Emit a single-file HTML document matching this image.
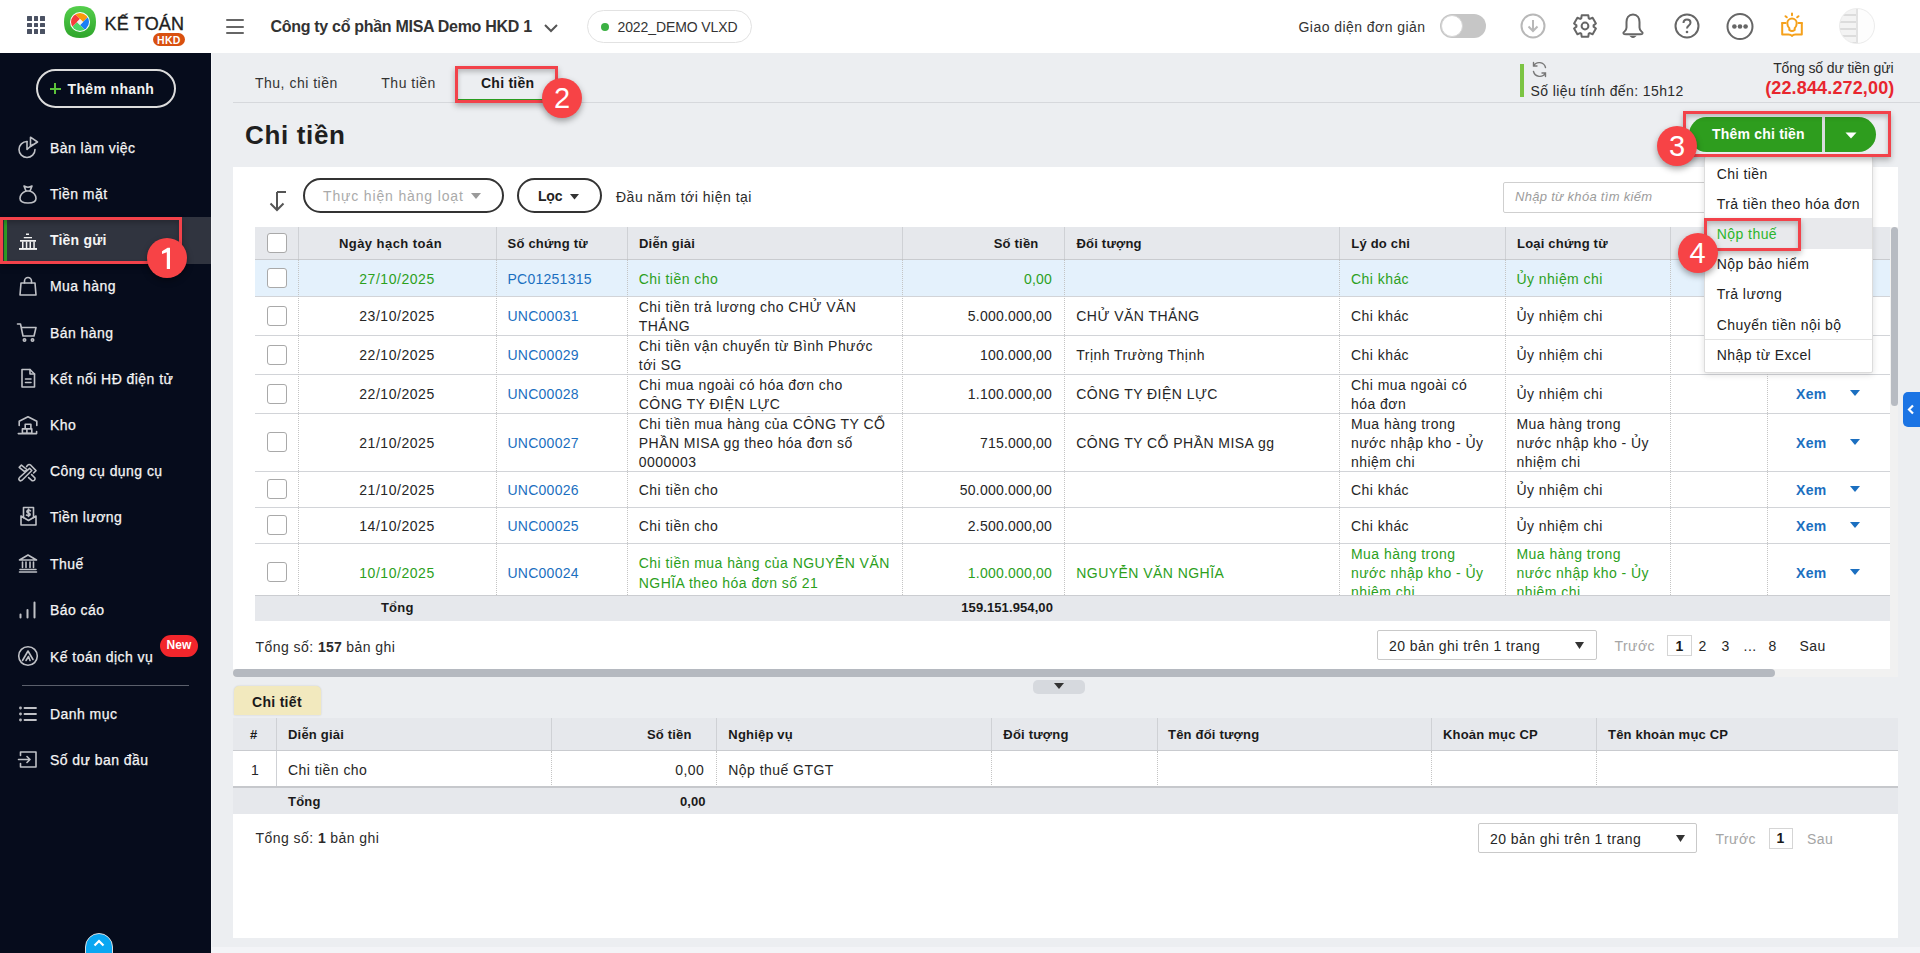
<!DOCTYPE html><html><head><meta charset="utf-8"><style>
*{box-sizing:border-box;margin:0;padding:0}
html,body{width:1920px;height:953px;overflow:hidden;background:#eceef1;font-family:"Liberation Sans", sans-serif;}
.t{position:absolute;white-space:nowrap;}
.r{position:absolute;}
.ic{position:absolute;overflow:visible}
.badge{position:absolute;width:40px;height:40px;border-radius:50%;background:#f74346;color:#fff;font-size:29px;line-height:40px;text-align:center;font-family:"Liberation Sans", sans-serif;box-shadow:0 3px 6px rgba(0,0,0,.35);}
.rbox{position:absolute;border:3px solid #f2424a;box-shadow:0 3px 6px rgba(0,0,0,.28), inset 0 3px 5px rgba(0,0,0,.22);}
</style></head><body><div class="r" style="left:0px;top:0px;width:1920px;height:53px;background:#fff;"></div>
<div class="r" style="left:27.0px;top:16.0px;width:4.6px;height:4.6px;background:#4b5263;border-radius:.5px;"></div>
<div class="r" style="left:33.6px;top:16.0px;width:4.6px;height:4.6px;background:#4b5263;border-radius:.5px;"></div>
<div class="r" style="left:40.2px;top:16.0px;width:4.6px;height:4.6px;background:#4b5263;border-radius:.5px;"></div>
<div class="r" style="left:27.0px;top:22.6px;width:4.6px;height:4.6px;background:#4b5263;border-radius:.5px;"></div>
<div class="r" style="left:33.6px;top:22.6px;width:4.6px;height:4.6px;background:#4b5263;border-radius:.5px;"></div>
<div class="r" style="left:40.2px;top:22.6px;width:4.6px;height:4.6px;background:#4b5263;border-radius:.5px;"></div>
<div class="r" style="left:27.0px;top:29.2px;width:4.6px;height:4.6px;background:#4b5263;border-radius:.5px;"></div>
<div class="r" style="left:33.6px;top:29.2px;width:4.6px;height:4.6px;background:#4b5263;border-radius:.5px;"></div>
<div class="r" style="left:40.2px;top:29.2px;width:4.6px;height:4.6px;background:#4b5263;border-radius:.5px;"></div>
<svg class="ic" style="left:64px;top:6px" width="32" height="32" viewBox="0 0 32 32">
<defs><linearGradient id="lg" x1="0" y1="0" x2="0" y2="1"><stop offset="0" stop-color="#55cf4c"/><stop offset="1" stop-color="#2ea52b"/></linearGradient></defs>
<path d="M16 0 C27 0 32 5 32 16 C32 27 27 32 16 32 C5 32 0 27 0 16 C0 5 5 0 16 0Z" fill="url(#lg)"/>
<circle cx="16" cy="16" r="10" fill="#fff"/>
<clipPath id="cc"><circle cx="0" cy="0" r="9"/></clipPath>
<g transform="translate(16 16)" clip-path="url(#cc)">
<path d="M0 -3 L-20 -23 L23 -20 L3 0Z" fill="#fa9a0a"/>
<path d="M3 0 L23 -20 L20 23 L0 3Z" fill="#1a7ff5"/>
<path d="M0 3 L20 23 L-23 20 L-3 0Z" fill="#4ad866"/>
<path d="M-3 0 L-23 20 L-20 -23 L0 -3Z" fill="#f53b3b"/>
<path d="M0 -3 L3 0 L0 3 L-3 0Z" fill="#f2f2f2"/>
</g></svg>
<div class="t" style="left:104.5px;top:13.91px;font-size:18px;line-height:20.7px;font-weight:400;color:#1e1e1e;letter-spacing:0.2px;-webkit-text-stroke:0.35px #1e1e1e;">KẾ TOÁN</div>
<div class="r" style="left:153px;top:33.3px;width:32px;height:12.5px;background:#d9500f;border-radius:7px;"></div>
<div class="t" style="left:157px;top:33.83px;font-size:10.5px;line-height:12.07px;font-weight:700;color:#fff;letter-spacing:0.3px;">HKD</div>
<div class="r" style="left:226px;top:19.0px;width:18px;height:2px;background:#666;border-radius:1px;"></div>
<div class="r" style="left:226px;top:25.5px;width:18px;height:2px;background:#666;border-radius:1px;"></div>
<div class="r" style="left:226px;top:32.0px;width:18px;height:2px;background:#666;border-radius:1px;"></div>
<div class="t" style="left:270.5px;top:18.46px;font-size:16px;line-height:18.4px;font-weight:700;color:#333;letter-spacing:-0.3px;">Công ty cổ phần MISA Demo HKD 1</div>
<svg class="ic" style="left:543px;top:22px" width="16" height="12" viewBox="0 0 16 12"><path d="M2 3 L8 9 L14 3" fill="none" stroke="#555" stroke-width="2"/></svg>
<div class="r" style="left:587px;top:10px;width:165px;height:33px;border:1px solid #e2e2e2;border-radius:17px;background:#fff;"></div>
<div class="r" style="left:601px;top:23px;width:8px;height:8px;background:#3bb143;border-radius:50%;"></div>
<div class="t" style="left:617.5px;top:19.40px;font-size:14px;line-height:16.1px;font-weight:400;color:#333;letter-spacing:-0.1px;">2022_DEMO VLXD</div>
<div class="t" style="left:1298.5px;top:18.90px;font-size:14px;line-height:16.1px;font-weight:400;color:#333;letter-spacing:0.45px;">Giao diện đơn giản</div>
<div class="r" style="left:1440px;top:14px;width:46px;height:24px;background:#c6c6c6;border-radius:12px;"></div>
<div class="r" style="left:1441px;top:15px;width:22px;height:22px;background:#fff;border-radius:50%;border:1px solid #d6d6d6;"></div>
<svg class="ic" style="left:1520px;top:13px" width="26" height="26" viewBox="0 0 26 26"><circle cx="13" cy="13" r="11.5" fill="none" stroke="#b8b8b8" stroke-width="2"/><path d="M13 7 V18 M8.5 13.5 L13 18 L17.5 13.5" fill="none" stroke="#b8b8b8" stroke-width="2"/></svg>
<svg class="ic" style="left:1572px;top:13px" width="26" height="26" viewBox="0 0 26 26"><path fill="none" stroke="#666" stroke-width="2" stroke-linejoin="round" transform="rotate(90 13 13)" d="M20.74 9.26 L23.70 9.69 L23.70 16.31 L20.74 16.74 L20.11 17.84 L21.22 20.61 L15.48 23.92 L13.63 21.58 L12.37 21.58 L10.52 23.92 L4.78 20.61 L5.89 17.84 L5.26 16.74 L2.30 16.31 L2.30 9.69 L5.26 9.26 L5.89 8.16 L4.78 5.39 L10.52 2.08 L12.37 4.42 L13.63 4.42 L15.48 2.08 L21.22 5.39 L20.11 8.16Z"/><circle cx="13" cy="13" r="3.4" fill="none" stroke="#666" stroke-width="2"/></svg>
<svg class="ic" style="left:1620px;top:12px" width="26" height="28" viewBox="0 0 26 28"><path d="M13 2.5 C8.5 2.5 6.5 6 6.5 10 V15.5 Q6.5 18 4.5 19.5 Q3 20.5 3.5 21.5 Q4 22.3 6 22.3 H20 Q22 22.3 22.5 21.5 Q23 20.5 21.5 19.5 Q19.5 18 19.5 15.5 V10 C19.5 6 17.5 2.5 13 2.5Z" fill="none" stroke="#666" stroke-width="2" stroke-linejoin="round"/><path d="M10.8 24.3 Q13 26.3 15.2 24.3Z" fill="#666" stroke="#666" stroke-width="1.2"/></svg>
<svg class="ic" style="left:1674px;top:13px" width="26" height="26" viewBox="0 0 26 26"><circle cx="13" cy="13" r="11.5" fill="none" stroke="#666" stroke-width="2"/><path d="M9.5 10 C9.5 7.5 11 6.5 13 6.5 C15 6.5 16.5 7.8 16.5 9.7 C16.5 12.5 13 12.5 13 15.5" fill="none" stroke="#666" stroke-width="2"/><circle cx="13" cy="19" r="1.3" fill="#666"/></svg>
<svg class="ic" style="left:1726px;top:13px" width="28" height="28" viewBox="0 0 28 28"><circle cx="14" cy="13.5" r="12.5" fill="none" stroke="#666" stroke-width="2"/><circle cx="8.4" cy="13.5" r="2.3" fill="#666"/><circle cx="14" cy="13.5" r="2.3" fill="#666"/><circle cx="19.6" cy="13.5" r="2.3" fill="#666"/></svg>
<svg class="ic" style="left:1779px;top:12px" width="26" height="26" viewBox="0 0 26 26"><g fill="none" stroke="#f5a11c" stroke-width="2" stroke-linejoin="round" stroke-linecap="round"><path d="M3.2 11 V22.5 H9.5 Q12 22.5 13 24 Q14 22.5 16.5 22.5 H22.8 V11"/><path d="M3.2 11 H6.5 M22.8 11 H19.5"/><path d="M10.3 16.2 Q8.3 14.2 8.3 11.3 A4.7 4.7 0 0 1 17.7 11.3 Q17.7 14.2 15.7 16.2 V18 Q13 20 10.3 18Z"/><path d="M13 1.5 V3.2 M6.5 4.2 L7.8 5.3 M19.5 4.2 L18.2 5.3"/></g></svg>
<div class="r" style="left:1839px;top:8px;width:36px;height:36px;border-radius:50%;background:linear-gradient(90deg,rgba(255,255,255,0) 48%,#e2e2e2 48%,#e2e2e2 52%,#fdfdfd 52%),repeating-linear-gradient(180deg,#f3f3f3 0,#f3f3f3 5px,#dcdcdc 5px,#dcdcdc 7px);border:1px solid #ececec;"></div>
<div class="r" style="left:0px;top:53px;width:211px;height:900px;background:#060c1c;"></div>
<div class="r" style="left:211px;top:53px;width:1px;height:900px;background:#f4f5f7;"></div>
<div class="r" style="left:36px;top:69px;width:140px;height:39px;border:2px solid #dcdcdc;border-radius:20px;"></div>
<div class="r" style="left:49.5px;top:87.5px;width:11.5px;height:2.2px;background:#5cc33a;"></div>
<div class="r" style="left:54.1px;top:82.8px;width:2.2px;height:11.5px;background:#5cc33a;"></div>
<div class="t" style="left:67.5px;top:80.60px;font-size:14px;line-height:16.1px;font-weight:700;color:#f2f2f2;letter-spacing:0.35px;">Thêm nhanh</div>
<div class="r" style="left:0px;top:217px;width:211px;height:47px;background:#30343f;"></div>
<div class="r" style="left:3.5px;top:220px;width:3px;height:42px;background:#2f9e24;"></div>
<div class="t" style="left:50px;top:139.90px;font-size:14px;line-height:16.1px;font-weight:400;color:#f5f5f5;letter-spacing:0.45px;-webkit-text-stroke:0.25px #f5f5f5;">Bàn làm việc</div>
<div class="t" style="left:50px;top:186.00px;font-size:14px;line-height:16.1px;font-weight:400;color:#f5f5f5;letter-spacing:0.45px;-webkit-text-stroke:0.25px #f5f5f5;">Tiền mặt</div>
<div class="t" style="left:50px;top:232.10px;font-size:14px;line-height:16.1px;font-weight:700;color:#f5f5f5;letter-spacing:0.2px;">Tiền gửi</div>
<div class="t" style="left:50px;top:278.40px;font-size:14px;line-height:16.1px;font-weight:400;color:#f5f5f5;letter-spacing:0.45px;-webkit-text-stroke:0.25px #f5f5f5;">Mua hàng</div>
<div class="t" style="left:50px;top:324.60px;font-size:14px;line-height:16.1px;font-weight:400;color:#f5f5f5;letter-spacing:0.45px;-webkit-text-stroke:0.25px #f5f5f5;">Bán hàng</div>
<div class="t" style="left:50px;top:370.70px;font-size:14px;line-height:16.1px;font-weight:400;color:#f5f5f5;letter-spacing:0.45px;-webkit-text-stroke:0.25px #f5f5f5;">Kết nối HĐ điện tử</div>
<div class="t" style="left:50px;top:416.90px;font-size:14px;line-height:16.1px;font-weight:400;color:#f5f5f5;letter-spacing:0.45px;-webkit-text-stroke:0.25px #f5f5f5;">Kho</div>
<div class="t" style="left:50px;top:463.10px;font-size:14px;line-height:16.1px;font-weight:400;color:#f5f5f5;letter-spacing:0.45px;-webkit-text-stroke:0.25px #f5f5f5;">Công cụ dụng cụ</div>
<div class="t" style="left:50px;top:509.40px;font-size:14px;line-height:16.1px;font-weight:400;color:#f5f5f5;letter-spacing:0.45px;-webkit-text-stroke:0.25px #f5f5f5;">Tiền lương</div>
<div class="t" style="left:50px;top:555.70px;font-size:14px;line-height:16.1px;font-weight:400;color:#f5f5f5;letter-spacing:0.45px;-webkit-text-stroke:0.25px #f5f5f5;">Thuế</div>
<div class="t" style="left:50px;top:602.10px;font-size:14px;line-height:16.1px;font-weight:400;color:#f5f5f5;letter-spacing:0.45px;-webkit-text-stroke:0.25px #f5f5f5;">Báo cáo</div>
<div class="t" style="left:50px;top:648.60px;font-size:14px;line-height:16.1px;font-weight:400;color:#f5f5f5;letter-spacing:0.45px;-webkit-text-stroke:0.25px #f5f5f5;">Kế toán dịch vụ</div>
<div class="t" style="left:50px;top:706.10px;font-size:14px;line-height:16.1px;font-weight:400;color:#f5f5f5;letter-spacing:0.45px;-webkit-text-stroke:0.25px #f5f5f5;">Danh mục</div>
<div class="t" style="left:50px;top:751.90px;font-size:14px;line-height:16.1px;font-weight:400;color:#f5f5f5;letter-spacing:0.45px;-webkit-text-stroke:0.25px #f5f5f5;">Số dư ban đầu</div>
<div class="r" style="left:22px;top:685px;width:167px;height:1px;background:#5b606c;"></div>
<div class="r" style="left:160px;top:635px;width:38px;height:22px;background:#f2262c;border-radius:11px;"></div>
<div class="t" style="left:166.5px;top:639.44px;font-size:12px;line-height:13.8px;font-weight:700;color:#fff;letter-spacing:0.1px;">New</div>
<svg class="ic" style="left:17px;top:136px" width="22" height="22" viewBox="0 0 22 22"><g fill="none" stroke="#bfc1c6" stroke-width="1.6" stroke-linejoin="round" stroke-linecap="round"><path d="M10 5.5 A8 8 0 1 0 18 13.5"/><path d="M10 5.5 V13.5 L15.5 8.5"/><path d="M13.5 1.2 L20.5 6 L13.5 10.5Z"/></g></svg>
<svg class="ic" style="left:17px;top:183px" width="22" height="22" viewBox="0 0 22 22"><g fill="none" stroke="#bfc1c6" stroke-width="1.6" stroke-linejoin="round" stroke-linecap="round"><path d="M7 3 Q11 5.5 15 3 L13 8 Q19 10.5 19 15.5 Q19 20 11 20 Q3 20 3 15.5 Q3 10.5 9 8Z"/><path d="M9 8 H13"/></g></svg>
<svg class="ic" style="left:17px;top:228px" width="22" height="22" viewBox="0 0 22 22"><g fill="#f2f2f2"><rect x="9" y="5.5" width="3" height="1.5"/><rect x="6.8" y="9" width="8.2" height="1.3"/><rect x="3" y="12" width="16" height="1.7"/><rect x="5" y="13.5" width="1.5" height="6.6"/><rect x="8.8" y="13.5" width="1.5" height="6.6"/><rect x="12.5" y="13.5" width="1.5" height="6.6"/><rect x="16.3" y="13.5" width="1.5" height="6.6"/><rect x="2" y="20" width="18" height="1.9"/></g></svg>
<svg class="ic" style="left:17px;top:275px" width="22" height="22" viewBox="0 0 22 22"><g fill="none" stroke="#bfc1c6" stroke-width="1.6" stroke-linejoin="round" stroke-linecap="round"><path d="M4 8 H18 L19 20 H3Z"/><path d="M7.5 8 V6 A3.5 3.5 0 0 1 14.5 6 V8"/></g></svg>
<svg class="ic" style="left:16px;top:321px" width="22" height="22" viewBox="0 0 22 22"><g fill="none" stroke="#bfc1c6" stroke-width="1.6" stroke-linejoin="round" stroke-linecap="round"><path d="M1.5 3 H4.5 L7 15 H18 L20 6.5 H6"/><circle cx="8.5" cy="19" r="1.2"/><circle cx="16.5" cy="19" r="1.2"/></g></svg>
<svg class="ic" style="left:17px;top:367px" width="22" height="22" viewBox="0 0 22 22"><g fill="none" stroke="#bfc1c6" stroke-width="1.6" stroke-linejoin="round" stroke-linecap="round"><path d="M5 2.5 H13 L17.5 7 V20 H5Z"/><path d="M13 2.5 V7 H17.5 M8.5 12 H14 M8.5 15.5 H14"/></g></svg>
<svg class="ic" style="left:17px;top:413px" width="22" height="22" viewBox="0 0 22 22"><g fill="none" stroke="#bfc1c6" stroke-width="1.6" stroke-linejoin="round" stroke-linecap="round"><path d="M2.2 12.4 V8.3 L11 3.8 L19.8 8.3 V12.4"/><path d="M1.3 20.6 H19.6 V18.6"/><path d="M8.2 11.2 H13.9 V15.9 H8.2Z M5.4 15.9 H14.8 V20.3 H5.4Z M9.9 15.9 V20.3"/></g></svg>
<svg class="ic" style="left:17px;top:459px" width="22" height="22" viewBox="0 0 22 22"><g fill="none" stroke="#bfc1c6" stroke-width="1.6" stroke-linejoin="round" stroke-linecap="round"><path d="M2.2 8.3 L4.4 6.1 L9.8 10.5 L7.6 12.7Z"/><path d="M12.6 9.3 L14.8 11.5 L5 21.2 Q3.6 22.4 2.3 21.2 Q1.1 19.9 2.5 18.5Z"/><path d="M9.6 7.6 Q11.2 4.4 13.8 6.2 L19 11.6 L16.6 14"/><path d="M14.6 15.6 L18 19 Q18.3 22.2 15 21.6 L11.6 18.6"/></g></svg>
<svg class="ic" style="left:17px;top:505px" width="22" height="22" viewBox="0 0 22 22"><g fill="none" stroke="#bfc1c6" stroke-width="1.6" stroke-linejoin="round" stroke-linecap="round"><path d="M4 11 V20 H19 V11 L11.5 15.5Z M6.5 13 V2.5 H16.5 V13"/><path d="M13.5 5.8 Q11.5 4.5 10 6 Q9.5 7.5 11.5 8 Q13.5 8.5 13 10 Q12 11.3 9.5 10 M11.5 4 V11.5"/></g></svg>
<svg class="ic" style="left:17px;top:552px" width="22" height="22" viewBox="0 0 22 22"><g fill="none" stroke="#bfc1c6" stroke-width="1.6" stroke-linejoin="round" stroke-linecap="round"><path d="M2.5 8 L11 3 L19.5 8 Z M2.5 20 H19.5 M3 17.5 H19 M5.5 10 V15.5 M9 10 V15.5 M13 10 V15.5 M16.5 10 V15.5"/></g></svg>
<svg class="ic" style="left:17px;top:598px" width="22" height="22" viewBox="0 0 22 22"><g fill="none" stroke="#bfc1c6" stroke-width="1.6" stroke-linejoin="round" stroke-linecap="round"><path d="M3.5 19.5 V16.5 M10.5 19.5 V12 M17.5 19.5 V4.5" stroke-width="2"/></g></svg>
<svg class="ic" style="left:17px;top:645px" width="22" height="22" viewBox="0 0 22 22"><g fill="none" stroke="#bfc1c6" stroke-width="1.6" stroke-linejoin="round" stroke-linecap="round"><circle cx="11" cy="11" r="9.3"/><path d="M5.5 15.5 L11 6 L16 14.5 M9 15.5 L11.5 11.5 L13 15.5" /></g></svg>
<svg class="ic" style="left:17px;top:703px" width="22" height="22" viewBox="0 0 22 22"><g fill="none" stroke="#bfc1c6" stroke-width="1.6" stroke-linejoin="round" stroke-linecap="round"><path d="M7.5 5 H19 M7.5 11 H19 M7.5 17 H19" stroke-width="1.8"/><circle cx="3.5" cy="5" r=".6"/><circle cx="3.5" cy="11" r=".6"/><circle cx="3.5" cy="17" r=".6"/></g></svg>
<svg class="ic" style="left:17px;top:748px" width="22" height="22" viewBox="0 0 22 22"><g fill="none" stroke="#bfc1c6" stroke-width="1.6" stroke-linejoin="round" stroke-linecap="round"><path d="M3.5 7.5 V4 H19 V19 H3.5 V15.5 M1.5 11.5 H13 M10 8.5 L13 11.5 L10 14.5"/></g></svg>
<div class="r" style="left:85px;top:933px;width:28px;height:40px;border-radius:14px;background:#0aa7f2;border:1px solid #ddd;"></div>
<svg class="ic" style="left:92px;top:938px" width="14" height="10" viewBox="0 0 14 10"><path d="M2.5 7.5 L7 3 L11.5 7.5" fill="none" stroke="#fff" stroke-width="2.2"/></svg>
<div class="t" style="left:255px;top:75.10px;font-size:14px;line-height:16.1px;font-weight:400;color:#333;letter-spacing:0.5px;">Thu, chi tiền</div>
<div class="t" style="left:381.3px;top:75.10px;font-size:14px;line-height:16.1px;font-weight:400;color:#333;letter-spacing:0.5px;">Thu tiền</div>
<div class="r" style="left:233px;top:102px;width:1687px;height:1px;background:#d6d8dc;"></div>
<div class="r" style="left:458px;top:99px;width:97px;height:2px;background:#2a9f20;"></div>
<div class="t" style="left:481px;top:75.10px;font-size:14px;line-height:16.1px;font-weight:700;color:#1a1a1a;letter-spacing:0.25px;">Chi tiền</div>
<div class="t" style="left:245px;top:120.54px;font-size:26px;line-height:29.9px;font-weight:700;color:#1f1f1f;letter-spacing:0.65px;">Chi tiền</div>
<div class="r" style="left:1520px;top:64px;width:4px;height:33px;background:#7cc443;"></div>
<svg class="ic" style="left:1530px;top:60px" width="19" height="19" viewBox="0 0 19 19"><g fill="none" stroke="#777" stroke-width="1.4" stroke-linecap="round"><path d="M15.5 7.5 A6.5 6.5 0 0 0 3.5 6 M3.5 2.5 V6 H7"/><path d="M3.5 11.5 A6.5 6.5 0 0 0 15.5 13 M15.5 16.5 V13 H12"/></g></svg>
<div class="t" style="left:1530.5px;top:83.10px;font-size:14px;line-height:16.1px;font-weight:400;color:#2b2b2b;letter-spacing:0.4px;">Số liệu tính đến: 15h12</div>
<div class="t" style="right:26.5px;top:59.60px;font-size:14px;line-height:16.1px;font-weight:400;color:#2b2b2b;letter-spacing:-0.1px;">Tổng số dư tiền gửi</div>
<div class="t" style="right:25.5px;top:78.41px;font-size:18px;line-height:20.7px;font-weight:700;color:#e8262e;letter-spacing:0.15px;">(22.844.272,00)</div>
<div class="r" style="left:1689px;top:117px;width:187px;height:35px;background:#2e9d1e;border-radius:18px;"></div>
<div class="r" style="left:1822px;top:117px;width:3px;height:35px;background:#dadcde;"></div>
<div class="t" style="left:1712px;top:126.10px;font-size:14px;line-height:16.1px;font-weight:700;color:#fff;letter-spacing:0.2px;">Thêm chi tiền</div>
<svg class="ic" style="left:1845px;top:132px" width="12" height="7" viewBox="0 0 12 7"><path d="M0.5 0.5 H11.5 L6 6.5Z" fill="#fff"/></svg>
<div class="r" style="left:233px;top:167px;width:1665px;height:502px;background:#fff;"></div>
<svg class="ic" style="left:266px;top:188px" width="24" height="26" viewBox="0 0 24 26"><g fill="none" stroke="#555" stroke-width="2"><path d="M11 4 H20 M11 4 V22 M4.5 15.5 L11 22 L17.5 15.5"/></g></svg>
<div class="r" style="left:303px;top:178px;width:201px;height:35px;border:2px solid #333;border-radius:18px;"></div>
<div class="t" style="left:323px;top:188.10px;font-size:14px;line-height:16.1px;font-weight:400;color:#aaaaaa;letter-spacing:0.85px;">Thực hiện hàng loạt</div>
<svg class="ic" style="left:471px;top:193px" width="10" height="6" viewBox="0 0 10 6"><path d="M0 0 H10 L5 6Z" fill="#9a9a9a"/></svg>
<div class="r" style="left:517px;top:178px;width:85px;height:35px;border:2px solid #333;border-radius:18px;"></div>
<div class="t" style="left:538px;top:188.10px;font-size:14px;line-height:16.1px;font-weight:700;color:#222;letter-spacing:-0.2px;">Lọc</div>
<svg class="ic" style="left:569.5px;top:193.5px" width="9" height="6" viewBox="0 0 9 6"><path d="M0 0 H9 L4.5 5.5Z" fill="#333"/></svg>
<div class="t" style="left:616px;top:188.60px;font-size:14px;line-height:16.1px;font-weight:400;color:#2b2b2b;letter-spacing:0.5px;">Đầu năm tới hiện tại</div>
<div class="r" style="left:1503px;top:182px;width:369px;height:31px;border:1px solid #cfcfcf;border-radius:2px;"></div>
<div class="t" style="left:1515px;top:190.02px;font-size:13px;line-height:14.95px;font-weight:400;color:#9c9c9c;letter-spacing:0.3px;font-style:italic;">Nhập từ khóa tìm kiếm</div>
<div class="r" style="left:255px;top:227px;width:1635px;height:32px;background:#e6e8ec;"></div>
<div class="r" style="left:255px;top:259px;width:1635px;height:1px;background:#c9cbcf;"></div>
<div class="r" style="left:298px;top:227px;width:1px;height:32px;background:#cfd1d5;"></div>
<div class="r" style="left:496px;top:227px;width:1px;height:32px;background:#cfd1d5;"></div>
<div class="r" style="left:627px;top:227px;width:1px;height:32px;background:#cfd1d5;"></div>
<div class="r" style="left:902px;top:227px;width:1px;height:32px;background:#cfd1d5;"></div>
<div class="r" style="left:1064px;top:227px;width:1px;height:32px;background:#cfd1d5;"></div>
<div class="r" style="left:1339px;top:227px;width:1px;height:32px;background:#cfd1d5;"></div>
<div class="r" style="left:1505px;top:227px;width:1px;height:32px;background:#cfd1d5;"></div>
<div class="r" style="left:1670px;top:227px;width:1px;height:32px;background:#cfd1d5;"></div>
<div class="r" style="left:1767px;top:227px;width:1px;height:32px;background:#cfd1d5;"></div>
<div class="t" style="left:90.5px;width:600px;text-align:center;top:237.02px;font-size:13px;line-height:14.95px;font-weight:700;color:#1a1a1a;letter-spacing:0.45px;">Ngày hạch toán</div>
<div class="t" style="left:507.6px;top:237.02px;font-size:13px;line-height:14.95px;font-weight:700;color:#1a1a1a;letter-spacing:0.2px;">Số chứng từ</div>
<div class="t" style="left:639px;top:237.02px;font-size:13px;line-height:14.95px;font-weight:700;color:#1a1a1a;letter-spacing:0.2px;">Diễn giải</div>
<div class="t" style="right:881.5px;top:237.02px;font-size:13px;line-height:14.95px;font-weight:700;color:#1a1a1a;letter-spacing:0.2px;">Số tiền</div>
<div class="t" style="left:1076.5px;top:237.02px;font-size:13px;line-height:14.95px;font-weight:700;color:#1a1a1a;letter-spacing:0.2px;">Đối tượng</div>
<div class="t" style="left:1351.3px;top:237.02px;font-size:13px;line-height:14.95px;font-weight:700;color:#1a1a1a;letter-spacing:0.2px;">Lý do chi</div>
<div class="t" style="left:1517px;top:237.02px;font-size:13px;line-height:14.95px;font-weight:700;color:#1a1a1a;letter-spacing:0.2px;">Loại chứng từ</div>
<div class="r" style="left:267px;top:233px;width:20px;height:20px;border:1px solid #a9a9a9;border-radius:3px;background:#fff;"></div>
<div class="r" style="left:0;top:0;width:1920px;height:595.2px;overflow:hidden;">
<div class="r" style="left:255px;top:260px;width:1635px;height:36px;background:#e4f1fc;"></div>
<div class="r" style="left:255px;top:296px;width:1635px;height:1px;background:#d2d4d8;"></div>
<div class="r" style="left:255px;top:335px;width:1635px;height:1px;background:#d2d4d8;"></div>
<div class="r" style="left:255px;top:374px;width:1635px;height:1px;background:#d2d4d8;"></div>
<div class="r" style="left:255px;top:413px;width:1635px;height:1px;background:#d2d4d8;"></div>
<div class="r" style="left:255px;top:471px;width:1635px;height:1px;background:#d2d4d8;"></div>
<div class="r" style="left:255px;top:507px;width:1635px;height:1px;background:#d2d4d8;"></div>
<div class="r" style="left:255px;top:543px;width:1635px;height:1px;background:#d2d4d8;"></div>
<div class="r" style="left:298px;top:259px;width:1px;height:336.2px;border-left:1px dotted #c4c4c4;"></div>
<div class="r" style="left:496px;top:259px;width:1px;height:336.2px;border-left:1px dotted #c4c4c4;"></div>
<div class="r" style="left:627px;top:259px;width:1px;height:336.2px;border-left:1px dotted #c4c4c4;"></div>
<div class="r" style="left:902px;top:259px;width:1px;height:336.2px;border-left:1px dotted #c4c4c4;"></div>
<div class="r" style="left:1064px;top:259px;width:1px;height:336.2px;border-left:1px dotted #c4c4c4;"></div>
<div class="r" style="left:1339px;top:259px;width:1px;height:336.2px;border-left:1px dotted #c4c4c4;"></div>
<div class="r" style="left:1505px;top:259px;width:1px;height:336.2px;border-left:1px dotted #c4c4c4;"></div>
<div class="r" style="left:1670px;top:259px;width:1px;height:336.2px;border-left:1px dotted #c4c4c4;"></div>
<div class="r" style="left:1767px;top:259px;width:1px;height:336.2px;border-left:1px dotted #c4c4c4;"></div>
</div>
<div class="r" style="left:0;top:0;width:1920px;height:595.2px;overflow:hidden;">
<div class="r" style="left:267px;top:268.0px;width:20px;height:20px;border:1px solid #a9a9a9;border-radius:3px;background:#fff;"></div>
<div class="t" style="left:97.0px;width:600px;text-align:center;top:270.85px;font-size:14px;line-height:16.1px;font-weight:400;color:#2ca01c;letter-spacing:0.55px;">27/10/2025</div>
<div class="t" style="left:507.5px;top:270.85px;font-size:14px;line-height:16.1px;font-weight:400;color:#1b6fc0;letter-spacing:0.25px;">PC01251315</div>
<div class="t" style="left:638.8px;top:270.85px;font-size:14px;line-height:16.1px;font-weight:400;color:#2ca01c;letter-spacing:0.45px;">Chi tiền cho</div>
<div class="t" style="right:868px;top:270.85px;font-size:14px;line-height:16.1px;font-weight:400;color:#2ca01c;letter-spacing:0.2px;">0,00</div>
<div class="t" style="left:1076.3px;top:270.85px;font-size:14px;line-height:16.1px;font-weight:400;color:#2ca01c;letter-spacing:0.45px;"></div>
<div class="t" style="left:1351px;top:270.85px;font-size:14px;line-height:16.1px;font-weight:400;color:#2ca01c;letter-spacing:0.45px;">Chi khác</div>
<div class="t" style="left:1516.5px;top:270.85px;font-size:14px;line-height:16.1px;font-weight:400;color:#2ca01c;letter-spacing:0.45px;">Ủy nhiệm chi</div>
<div class="r" style="left:267px;top:305.5px;width:20px;height:20px;border:1px solid #a9a9a9;border-radius:3px;background:#fff;"></div>
<div class="t" style="left:97.0px;width:600px;text-align:center;top:308.35px;font-size:14px;line-height:16.1px;font-weight:400;color:#262626;letter-spacing:0.55px;">23/10/2025</div>
<div class="t" style="left:507.5px;top:308.35px;font-size:14px;line-height:16.1px;font-weight:400;color:#1b6fc0;letter-spacing:0.25px;">UNC00031</div>
<div class="t" style="left:638.8px;top:298.70px;font-size:14px;line-height:16.1px;font-weight:400;color:#262626;letter-spacing:0.45px;">Chi tiền trả lương cho CHỬ VĂN</div>
<div class="t" style="left:638.8px;top:318.00px;font-size:14px;line-height:16.1px;font-weight:400;color:#262626;letter-spacing:0.45px;">THẮNG</div>
<div class="t" style="right:868px;top:308.35px;font-size:14px;line-height:16.1px;font-weight:400;color:#262626;letter-spacing:0.2px;">5.000.000,00</div>
<div class="t" style="left:1076.3px;top:308.35px;font-size:14px;line-height:16.1px;font-weight:400;color:#262626;letter-spacing:0.45px;">CHỬ VĂN THẮNG</div>
<div class="t" style="left:1351px;top:308.35px;font-size:14px;line-height:16.1px;font-weight:400;color:#262626;letter-spacing:0.45px;">Chi khác</div>
<div class="t" style="left:1516.5px;top:308.35px;font-size:14px;line-height:16.1px;font-weight:400;color:#262626;letter-spacing:0.45px;">Ủy nhiệm chi</div>
<div class="r" style="left:267px;top:344.5px;width:20px;height:20px;border:1px solid #a9a9a9;border-radius:3px;background:#fff;"></div>
<div class="t" style="left:97.0px;width:600px;text-align:center;top:347.35px;font-size:14px;line-height:16.1px;font-weight:400;color:#262626;letter-spacing:0.55px;">22/10/2025</div>
<div class="t" style="left:507.5px;top:347.35px;font-size:14px;line-height:16.1px;font-weight:400;color:#1b6fc0;letter-spacing:0.25px;">UNC00029</div>
<div class="t" style="left:638.8px;top:337.70px;font-size:14px;line-height:16.1px;font-weight:400;color:#262626;letter-spacing:0.45px;">Chi tiền vận chuyển từ Bình Phước</div>
<div class="t" style="left:638.8px;top:357.00px;font-size:14px;line-height:16.1px;font-weight:400;color:#262626;letter-spacing:0.45px;">tới SG</div>
<div class="t" style="right:868px;top:347.35px;font-size:14px;line-height:16.1px;font-weight:400;color:#262626;letter-spacing:0.2px;">100.000,00</div>
<div class="t" style="left:1076.3px;top:347.35px;font-size:14px;line-height:16.1px;font-weight:400;color:#262626;letter-spacing:0.45px;">Trịnh Trường Thịnh</div>
<div class="t" style="left:1351px;top:347.35px;font-size:14px;line-height:16.1px;font-weight:400;color:#262626;letter-spacing:0.45px;">Chi khác</div>
<div class="t" style="left:1516.5px;top:347.35px;font-size:14px;line-height:16.1px;font-weight:400;color:#262626;letter-spacing:0.45px;">Ủy nhiệm chi</div>
<div class="r" style="left:267px;top:383.5px;width:20px;height:20px;border:1px solid #a9a9a9;border-radius:3px;background:#fff;"></div>
<div class="t" style="left:97.0px;width:600px;text-align:center;top:386.35px;font-size:14px;line-height:16.1px;font-weight:400;color:#262626;letter-spacing:0.55px;">22/10/2025</div>
<div class="t" style="left:507.5px;top:386.35px;font-size:14px;line-height:16.1px;font-weight:400;color:#1b6fc0;letter-spacing:0.25px;">UNC00028</div>
<div class="t" style="left:638.8px;top:376.70px;font-size:14px;line-height:16.1px;font-weight:400;color:#262626;letter-spacing:0.45px;">Chi mua ngoài có hóa đơn cho</div>
<div class="t" style="left:638.8px;top:396.00px;font-size:14px;line-height:16.1px;font-weight:400;color:#262626;letter-spacing:0.45px;">CÔNG TY ĐIỆN LỰC</div>
<div class="t" style="right:868px;top:386.35px;font-size:14px;line-height:16.1px;font-weight:400;color:#262626;letter-spacing:0.2px;">1.100.000,00</div>
<div class="t" style="left:1076.3px;top:386.35px;font-size:14px;line-height:16.1px;font-weight:400;color:#262626;letter-spacing:0.45px;">CÔNG TY ĐIỆN LỰC</div>
<div class="t" style="left:1351px;top:376.70px;font-size:14px;line-height:16.1px;font-weight:400;color:#262626;letter-spacing:0.45px;">Chi mua ngoài có</div>
<div class="t" style="left:1351px;top:396.00px;font-size:14px;line-height:16.1px;font-weight:400;color:#262626;letter-spacing:0.45px;">hóa đơn</div>
<div class="t" style="left:1516.5px;top:386.35px;font-size:14px;line-height:16.1px;font-weight:400;color:#262626;letter-spacing:0.45px;">Ủy nhiệm chi</div>
<div class="t" style="left:1796px;top:386.35px;font-size:14px;line-height:16.1px;font-weight:700;color:#1b6fc0;letter-spacing:0.3px;">Xem</div>
<svg class="ic" style="left:1849.5px;top:390.0px" width="10" height="6" viewBox="0 0 10 6"><path d="M0 0 H10 L5 6Z" fill="#1b6fc0"/></svg>
<div class="r" style="left:267px;top:432.0px;width:20px;height:20px;border:1px solid #a9a9a9;border-radius:3px;background:#fff;"></div>
<div class="t" style="left:97.0px;width:600px;text-align:center;top:434.85px;font-size:14px;line-height:16.1px;font-weight:400;color:#262626;letter-spacing:0.55px;">21/10/2025</div>
<div class="t" style="left:507.5px;top:434.85px;font-size:14px;line-height:16.1px;font-weight:400;color:#1b6fc0;letter-spacing:0.25px;">UNC00027</div>
<div class="t" style="left:638.8px;top:415.55px;font-size:14px;line-height:16.1px;font-weight:400;color:#262626;letter-spacing:0.45px;">Chi tiền mua hàng của CÔNG TY CỔ</div>
<div class="t" style="left:638.8px;top:434.85px;font-size:14px;line-height:16.1px;font-weight:400;color:#262626;letter-spacing:0.45px;">PHẦN MISA gg theo hóa đơn số</div>
<div class="t" style="left:638.8px;top:454.15px;font-size:14px;line-height:16.1px;font-weight:400;color:#262626;letter-spacing:0.45px;">0000003</div>
<div class="t" style="right:868px;top:434.85px;font-size:14px;line-height:16.1px;font-weight:400;color:#262626;letter-spacing:0.2px;">715.000,00</div>
<div class="t" style="left:1076.3px;top:434.85px;font-size:14px;line-height:16.1px;font-weight:400;color:#262626;letter-spacing:0.45px;">CÔNG TY CỔ PHẦN MISA gg</div>
<div class="t" style="left:1351px;top:415.55px;font-size:14px;line-height:16.1px;font-weight:400;color:#262626;letter-spacing:0.45px;">Mua hàng trong</div>
<div class="t" style="left:1351px;top:434.85px;font-size:14px;line-height:16.1px;font-weight:400;color:#262626;letter-spacing:0.45px;">nước nhập kho - Ủy</div>
<div class="t" style="left:1351px;top:454.15px;font-size:14px;line-height:16.1px;font-weight:400;color:#262626;letter-spacing:0.45px;">nhiệm chi</div>
<div class="t" style="left:1516.5px;top:415.55px;font-size:14px;line-height:16.1px;font-weight:400;color:#262626;letter-spacing:0.45px;">Mua hàng trong</div>
<div class="t" style="left:1516.5px;top:434.85px;font-size:14px;line-height:16.1px;font-weight:400;color:#262626;letter-spacing:0.45px;">nước nhập kho - Ủy</div>
<div class="t" style="left:1516.5px;top:454.15px;font-size:14px;line-height:16.1px;font-weight:400;color:#262626;letter-spacing:0.45px;">nhiệm chi</div>
<div class="t" style="left:1796px;top:434.85px;font-size:14px;line-height:16.1px;font-weight:700;color:#1b6fc0;letter-spacing:0.3px;">Xem</div>
<svg class="ic" style="left:1849.5px;top:438.5px" width="10" height="6" viewBox="0 0 10 6"><path d="M0 0 H10 L5 6Z" fill="#1b6fc0"/></svg>
<div class="r" style="left:267px;top:479.0px;width:20px;height:20px;border:1px solid #a9a9a9;border-radius:3px;background:#fff;"></div>
<div class="t" style="left:97.0px;width:600px;text-align:center;top:481.85px;font-size:14px;line-height:16.1px;font-weight:400;color:#262626;letter-spacing:0.55px;">21/10/2025</div>
<div class="t" style="left:507.5px;top:481.85px;font-size:14px;line-height:16.1px;font-weight:400;color:#1b6fc0;letter-spacing:0.25px;">UNC00026</div>
<div class="t" style="left:638.8px;top:481.85px;font-size:14px;line-height:16.1px;font-weight:400;color:#262626;letter-spacing:0.45px;">Chi tiền cho</div>
<div class="t" style="right:868px;top:481.85px;font-size:14px;line-height:16.1px;font-weight:400;color:#262626;letter-spacing:0.2px;">50.000.000,00</div>
<div class="t" style="left:1076.3px;top:481.85px;font-size:14px;line-height:16.1px;font-weight:400;color:#262626;letter-spacing:0.45px;"></div>
<div class="t" style="left:1351px;top:481.85px;font-size:14px;line-height:16.1px;font-weight:400;color:#262626;letter-spacing:0.45px;">Chi khác</div>
<div class="t" style="left:1516.5px;top:481.85px;font-size:14px;line-height:16.1px;font-weight:400;color:#262626;letter-spacing:0.45px;">Ủy nhiệm chi</div>
<div class="t" style="left:1796px;top:481.85px;font-size:14px;line-height:16.1px;font-weight:700;color:#1b6fc0;letter-spacing:0.3px;">Xem</div>
<svg class="ic" style="left:1849.5px;top:485.5px" width="10" height="6" viewBox="0 0 10 6"><path d="M0 0 H10 L5 6Z" fill="#1b6fc0"/></svg>
<div class="r" style="left:267px;top:515.0px;width:20px;height:20px;border:1px solid #a9a9a9;border-radius:3px;background:#fff;"></div>
<div class="t" style="left:97.0px;width:600px;text-align:center;top:517.85px;font-size:14px;line-height:16.1px;font-weight:400;color:#262626;letter-spacing:0.55px;">14/10/2025</div>
<div class="t" style="left:507.5px;top:517.85px;font-size:14px;line-height:16.1px;font-weight:400;color:#1b6fc0;letter-spacing:0.25px;">UNC00025</div>
<div class="t" style="left:638.8px;top:517.85px;font-size:14px;line-height:16.1px;font-weight:400;color:#262626;letter-spacing:0.45px;">Chi tiền cho</div>
<div class="t" style="right:868px;top:517.85px;font-size:14px;line-height:16.1px;font-weight:400;color:#262626;letter-spacing:0.2px;">2.500.000,00</div>
<div class="t" style="left:1076.3px;top:517.85px;font-size:14px;line-height:16.1px;font-weight:400;color:#262626;letter-spacing:0.45px;"></div>
<div class="t" style="left:1351px;top:517.85px;font-size:14px;line-height:16.1px;font-weight:400;color:#262626;letter-spacing:0.45px;">Chi khác</div>
<div class="t" style="left:1516.5px;top:517.85px;font-size:14px;line-height:16.1px;font-weight:400;color:#262626;letter-spacing:0.45px;">Ủy nhiệm chi</div>
<div class="t" style="left:1796px;top:517.85px;font-size:14px;line-height:16.1px;font-weight:700;color:#1b6fc0;letter-spacing:0.3px;">Xem</div>
<svg class="ic" style="left:1849.5px;top:521.5px" width="10" height="6" viewBox="0 0 10 6"><path d="M0 0 H10 L5 6Z" fill="#1b6fc0"/></svg>
<div class="r" style="left:267px;top:562.0px;width:20px;height:20px;border:1px solid #a9a9a9;border-radius:3px;background:#fff;"></div>
<div class="t" style="left:97.0px;width:600px;text-align:center;top:564.85px;font-size:14px;line-height:16.1px;font-weight:400;color:#2ca01c;letter-spacing:0.55px;">10/10/2025</div>
<div class="t" style="left:507.5px;top:564.85px;font-size:14px;line-height:16.1px;font-weight:400;color:#1b6fc0;letter-spacing:0.25px;">UNC00024</div>
<div class="t" style="left:638.8px;top:555.20px;font-size:14px;line-height:16.1px;font-weight:400;color:#2ca01c;letter-spacing:0.45px;">Chi tiền mua hàng của NGUYỄN VĂN</div>
<div class="t" style="left:638.8px;top:574.50px;font-size:14px;line-height:16.1px;font-weight:400;color:#2ca01c;letter-spacing:0.45px;">NGHĨA theo hóa đơn số 21</div>
<div class="t" style="right:868px;top:564.85px;font-size:14px;line-height:16.1px;font-weight:400;color:#2ca01c;letter-spacing:0.2px;">1.000.000,00</div>
<div class="t" style="left:1076.3px;top:564.85px;font-size:14px;line-height:16.1px;font-weight:400;color:#2ca01c;letter-spacing:0.45px;">NGUYỄN VĂN NGHĨA</div>
<div class="t" style="left:1351px;top:545.55px;font-size:14px;line-height:16.1px;font-weight:400;color:#2ca01c;letter-spacing:0.45px;">Mua hàng trong</div>
<div class="t" style="left:1351px;top:564.85px;font-size:14px;line-height:16.1px;font-weight:400;color:#2ca01c;letter-spacing:0.45px;">nước nhập kho - Ủy</div>
<div class="t" style="left:1351px;top:584.15px;font-size:14px;line-height:16.1px;font-weight:400;color:#2ca01c;letter-spacing:0.45px;">nhiệm chi</div>
<div class="t" style="left:1516.5px;top:545.55px;font-size:14px;line-height:16.1px;font-weight:400;color:#2ca01c;letter-spacing:0.45px;">Mua hàng trong</div>
<div class="t" style="left:1516.5px;top:564.85px;font-size:14px;line-height:16.1px;font-weight:400;color:#2ca01c;letter-spacing:0.45px;">nước nhập kho - Ủy</div>
<div class="t" style="left:1516.5px;top:584.15px;font-size:14px;line-height:16.1px;font-weight:400;color:#2ca01c;letter-spacing:0.45px;">nhiệm chi</div>
<div class="t" style="left:1796px;top:564.85px;font-size:14px;line-height:16.1px;font-weight:700;color:#1b6fc0;letter-spacing:0.3px;">Xem</div>
<svg class="ic" style="left:1849.5px;top:568.5px" width="10" height="6" viewBox="0 0 10 6"><path d="M0 0 H10 L5 6Z" fill="#1b6fc0"/></svg>
</div>
<div class="r" style="left:255px;top:595px;width:1635px;height:25.5px;background:#e6e8ec;"></div>
<div class="r" style="left:255px;top:595px;width:1635px;height:1px;background:#cbcdd1;"></div>
<div class="t" style="left:97.25px;width:600px;text-align:center;top:601.42px;font-size:13px;line-height:14.95px;font-weight:700;color:#1a1a1a;letter-spacing:0.2px;">Tổng</div>
<div class="t" style="right:867px;top:601.42px;font-size:13px;line-height:14.95px;font-weight:700;color:#1a1a1a;letter-spacing:0.1px;">159.151.954,00</div>
<div class="t" style="left:255.5px;top:638.58px;font-size:14px;line-height:16.1px;color:#2b2b2b;letter-spacing:.45px">Tổng số: <b style="letter-spacing:.2px">157</b> bản ghi</div>
<div class="r" style="left:1377px;top:630px;width:220px;height:30px;border:1px solid #c9c9c9;border-radius:2px;"></div>
<div class="t" style="left:1389px;top:638.10px;font-size:14px;line-height:16.1px;font-weight:400;color:#262626;letter-spacing:0.45px;">20 bản ghi trên 1 trang</div>
<svg class="ic" style="left:1575px;top:642px" width="9" height="7" viewBox="0 0 9 7"><path d="M0 0 H9 L4.5 7Z" fill="#333"/></svg>
<div class="t" style="left:1614.5px;top:638.10px;font-size:14px;line-height:16.1px;font-weight:400;color:#a5a5a5;letter-spacing:0.45px;">Trước</div>
<div class="r" style="left:1667px;top:635px;width:25px;height:21px;border:1px solid #d5d5d5;"></div>
<div class="t" style="left:1675.5px;top:637.60px;font-size:14px;line-height:16.1px;font-weight:700;color:#1a1a1a;letter-spacing:0.0px;">1</div>
<div class="t" style="left:1698.5px;top:637.60px;font-size:14px;line-height:16.1px;font-weight:400;color:#262626;letter-spacing:0.49px;">2</div>
<div class="t" style="left:1721.5px;top:637.60px;font-size:14px;line-height:16.1px;font-weight:400;color:#262626;letter-spacing:0.49px;">3</div>
<div class="t" style="left:1743.5px;top:637.60px;font-size:14px;line-height:16.1px;font-weight:400;color:#262626;letter-spacing:0.49px;">...</div>
<div class="t" style="left:1768.5px;top:637.60px;font-size:14px;line-height:16.1px;font-weight:400;color:#262626;letter-spacing:0.49px;">8</div>
<div class="t" style="left:1799.5px;top:638.10px;font-size:14px;line-height:16.1px;font-weight:400;color:#262626;letter-spacing:0.45px;">Sau</div>
<div class="r" style="left:233px;top:669px;width:1665px;height:8px;background:#f1f1f1;"></div>
<div class="r" style="left:233px;top:669px;width:1542px;height:8px;background:#b5b9c0;border-radius:4px;"></div>
<div class="r" style="left:1890px;top:227px;width:8px;height:442px;background:#f1f1f1;"></div>
<div class="r" style="left:1891px;top:227px;width:6.5px;height:179px;background:#b7bbc2;border-radius:3.5px;"></div>
<div class="r" style="left:1903px;top:392px;width:17px;height:35px;background:#1b74e4;border-radius:5px 0 0 5px;"></div>
<svg class="ic" style="left:1907px;top:404px" width="8" height="11" viewBox="0 0 8 11"><path d="M6 1.5 L2 5.5 L6 9.5" fill="none" stroke="#fff" stroke-width="2.2"/></svg>
<div class="r" style="left:1033px;top:680px;width:52px;height:14px;background:#d6d9de;border-radius:5px;"></div>
<svg class="ic" style="left:1054px;top:683px" width="10" height="6" viewBox="0 0 10 6"><path d="M0 0 H10 L5 6Z" fill="#333"/></svg>
<div class="r" style="left:234px;top:686px;width:87px;height:29px;background:#f2e9be;border-radius:5px 5px 0 0;box-shadow:0 0 2px rgba(0,0,0,.15);"></div>
<div class="t" style="left:252px;top:693.60px;font-size:14px;line-height:16.1px;font-weight:700;color:#1a1a1a;letter-spacing:0.3px;">Chi tiết</div>
<div class="r" style="left:233px;top:718px;width:1665px;height:32px;background:#e6e8ec;"></div>
<div class="r" style="left:233px;top:750px;width:1665px;height:1px;background:#c9cbcf;"></div>
<div class="r" style="left:276.3px;top:718px;width:1px;height:32px;background:#cfd1d5;"></div>
<div class="r" style="left:551.3px;top:718px;width:1px;height:32px;background:#cfd1d5;"></div>
<div class="r" style="left:716px;top:718px;width:1px;height:32px;background:#cfd1d5;"></div>
<div class="r" style="left:991.3px;top:718px;width:1px;height:32px;background:#cfd1d5;"></div>
<div class="r" style="left:1156.7px;top:718px;width:1px;height:32px;background:#cfd1d5;"></div>
<div class="r" style="left:1431px;top:718px;width:1px;height:32px;background:#cfd1d5;"></div>
<div class="r" style="left:1596px;top:718px;width:1px;height:32px;background:#cfd1d5;"></div>
<div class="t" style="left:250px;top:728.22px;font-size:13px;line-height:14.95px;font-weight:700;color:#1a1a1a;letter-spacing:0.0px;">#</div>
<div class="t" style="left:288px;top:728.22px;font-size:13px;line-height:14.95px;font-weight:700;color:#1a1a1a;letter-spacing:0.2px;">Diễn giải</div>
<div class="t" style="right:1228.3px;top:728.22px;font-size:13px;line-height:14.95px;font-weight:700;color:#1a1a1a;letter-spacing:0.2px;">Số tiền</div>
<div class="t" style="left:728.3px;top:728.22px;font-size:13px;line-height:14.95px;font-weight:700;color:#1a1a1a;letter-spacing:0.2px;">Nghiệp vụ</div>
<div class="t" style="left:1003.3px;top:728.22px;font-size:13px;line-height:14.95px;font-weight:700;color:#1a1a1a;letter-spacing:0.2px;">Đối tượng</div>
<div class="t" style="left:1168px;top:728.22px;font-size:13px;line-height:14.95px;font-weight:700;color:#1a1a1a;letter-spacing:0.2px;">Tên đối tượng</div>
<div class="t" style="left:1443px;top:728.22px;font-size:13px;line-height:14.95px;font-weight:700;color:#1a1a1a;letter-spacing:0.2px;">Khoản mục CP</div>
<div class="t" style="left:1608px;top:728.22px;font-size:13px;line-height:14.95px;font-weight:700;color:#1a1a1a;letter-spacing:0.2px;">Tên khoản mục CP</div>
<div class="r" style="left:233px;top:751px;width:1665px;height:35.5px;background:#fff;"></div>
<div class="r" style="left:276.3px;top:751px;width:1px;height:35.5px;background:#cfd1d5;"></div>
<div class="r" style="left:551.3px;top:751px;width:1px;height:35.5px;border-left:1px dotted #c4c4c4;"></div>
<div class="r" style="left:716px;top:751px;width:1px;height:35.5px;border-left:1px dotted #c4c4c4;"></div>
<div class="r" style="left:991.3px;top:751px;width:1px;height:35.5px;border-left:1px dotted #c4c4c4;"></div>
<div class="r" style="left:1156.7px;top:751px;width:1px;height:35.5px;border-left:1px dotted #c4c4c4;"></div>
<div class="r" style="left:1431px;top:751px;width:1px;height:35.5px;border-left:1px dotted #c4c4c4;"></div>
<div class="r" style="left:1596px;top:751px;width:1px;height:35.5px;border-left:1px dotted #c4c4c4;"></div>
<div class="t" style="left:251px;top:761.60px;font-size:14px;line-height:16.1px;font-weight:400;color:#262626;letter-spacing:0.49px;">1</div>
<div class="t" style="left:288px;top:761.60px;font-size:14px;line-height:16.1px;font-weight:400;color:#262626;letter-spacing:0.45px;">Chi tiền cho</div>
<div class="t" style="right:1215.7px;top:761.60px;font-size:14px;line-height:16.1px;font-weight:400;color:#262626;letter-spacing:0.45px;">0,00</div>
<div class="t" style="left:728.3px;top:761.60px;font-size:14px;line-height:16.1px;font-weight:400;color:#262626;letter-spacing:0.45px;">Nộp thuế GTGT</div>
<div class="r" style="left:233px;top:786px;width:1665px;height:2px;background:#c6c8cc;"></div>
<div class="r" style="left:233px;top:788px;width:1665px;height:26px;background:#e6e8ec;"></div>
<div class="t" style="left:288px;top:794.52px;font-size:13px;line-height:14.95px;font-weight:700;color:#1a1a1a;letter-spacing:0.2px;">Tổng</div>
<div class="t" style="right:1214.3px;top:794.52px;font-size:13px;line-height:14.95px;font-weight:700;color:#1a1a1a;letter-spacing:0.1px;">0,00</div>
<div class="r" style="left:233px;top:814px;width:1665px;height:124px;background:#fff;"></div>
<div class="r" style="left:212px;top:947px;width:1708px;height:6px;background:#f3f4f7;"></div>
<div class="t" style="left:255.5px;top:830.28px;font-size:14px;line-height:16.1px;color:#2b2b2b;letter-spacing:.45px">Tổng số: <b style="letter-spacing:.2px">1</b> bản ghi</div>
<div class="r" style="left:1478px;top:823px;width:219px;height:30px;border:1px solid #c9c9c9;border-radius:2px;"></div>
<div class="t" style="left:1490px;top:830.60px;font-size:14px;line-height:16.1px;font-weight:400;color:#262626;letter-spacing:0.45px;">20 bản ghi trên 1 trang</div>
<svg class="ic" style="left:1676px;top:835px" width="9" height="7" viewBox="0 0 9 7"><path d="M0 0 H9 L4.5 7Z" fill="#333"/></svg>
<div class="t" style="left:1715.5px;top:830.60px;font-size:14px;line-height:16.1px;font-weight:400;color:#a5a5a5;letter-spacing:0.45px;">Trước</div>
<div class="r" style="left:1769px;top:828px;width:24px;height:21px;border:1px solid #d5d5d5;"></div>
<div class="t" style="left:1776.5px;top:830.10px;font-size:14px;line-height:16.1px;font-weight:700;color:#1a1a1a;letter-spacing:0.0px;">1</div>
<div class="t" style="left:1807px;top:830.60px;font-size:14px;line-height:16.1px;font-weight:400;color:#a5a5a5;letter-spacing:0.45px;">Sau</div>
<div class="r" style="left:1704px;top:156px;width:169px;height:217px;background:#fff;border:1px solid #dcdcdc;border-radius:2px;box-shadow:0 2px 6px rgba(0,0,0,.12);"></div>
<div class="r" style="left:1705px;top:218px;width:167px;height:31px;background:#e8e9ec;"></div>
<div class="t" style="left:1716.7px;top:166.10px;font-size:14px;line-height:16.1px;font-weight:400;color:#222;letter-spacing:0.45px;">Chi tiền</div>
<div class="t" style="left:1716.7px;top:196.10px;font-size:14px;line-height:16.1px;font-weight:400;color:#222;letter-spacing:0.45px;">Trả tiền theo hóa đơn</div>
<div class="t" style="left:1716.7px;top:226.10px;font-size:14px;line-height:16.1px;font-weight:400;color:#2bb52b;letter-spacing:0.45px;">Nộp thuế</div>
<div class="t" style="left:1716.7px;top:256.10px;font-size:14px;line-height:16.1px;font-weight:400;color:#222;letter-spacing:0.45px;">Nộp bảo hiểm</div>
<div class="t" style="left:1716.7px;top:286.10px;font-size:14px;line-height:16.1px;font-weight:400;color:#222;letter-spacing:0.45px;">Trả lương</div>
<div class="t" style="left:1716.7px;top:316.60px;font-size:14px;line-height:16.1px;font-weight:400;color:#222;letter-spacing:0.45px;">Chuyển tiền nội bộ</div>
<div class="t" style="left:1716.7px;top:347.10px;font-size:14px;line-height:16.1px;font-weight:400;color:#222;letter-spacing:0.45px;">Nhập từ Excel</div>
<div class="r" style="left:1705px;top:339px;width:167px;height:1px;background:#e3e3e3;"></div>
<div class="rbox" style="left:0px;top:217px;width:182px;height:47px;"></div>
<div class="rbox" style="left:455px;top:66px;width:103px;height:37px;"></div>
<div class="rbox" style="left:1683px;top:111px;width:208px;height:46px;"></div>
<div class="rbox" style="left:1704px;top:217.5px;width:97px;height:33px;"></div>
<div class="badge" style="left:147px;top:238px"><svg width="40" height="40" viewBox="0 0 40 40" style="position:absolute;left:0;top:0"><path d="M20.6 9.8 H23 V31 H19.8 V14.2 L15 16 V13.2Z" fill="#fff"/></svg></div>
<div class="badge" style="left:542px;top:78px">2</div>
<div class="badge" style="left:1657px;top:126px">3</div>
<div class="badge" style="left:1677.5px;top:232.5px">4</div></body></html>
